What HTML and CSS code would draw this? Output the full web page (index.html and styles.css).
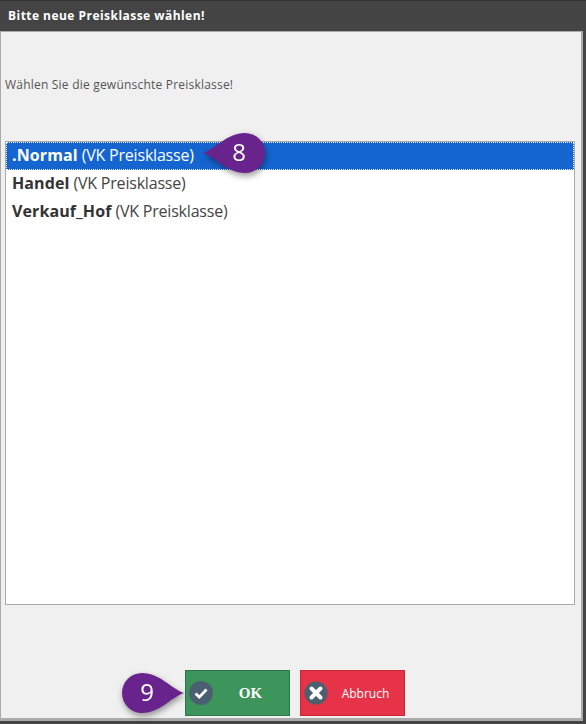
FILE: index.html
```html
<!DOCTYPE html>
<html>
<head>
<meta charset="utf-8">
<title>Preisklasse</title>
<link rel="stylesheet" href="styles.css">
</head>
<body>
<div class="window">
  <div class="titlebar">Bitte neue Preisklasse wählen!</div>
  <div class="content">
    <div class="message">Wählen Sie die gewünschte Preisklasse!</div>
    <div class="list">
      <div class="row selected"><b>.Normal</b> (VK Preisklasse)</div>
      <div class="row"><b>Handel</b> (VK Preisklasse)</div>
      <div class="row"><b>Verkauf_Hof</b> (VK Preisklasse)</div>
    </div>
    <div class="footer">
      <div class="btn ok">
        <svg class="btn-icon" width="24" height="24" viewBox="0 0 24 24">
          <circle cx="12" cy="12" r="12" fill="#4a6070"/>
          <path d="M6.5 12.5l3.8 3.6 7.2-7.6" fill="none" stroke="#fff" stroke-width="2.8"/>
        </svg>
        <span class="btn-label">OK</span>
      </div>
      <div class="btn cancel">
        <svg class="btn-icon" width="24" height="24" viewBox="0 0 24 24">
          <circle cx="12" cy="12" r="11.5" fill="#4a6070"/>
          <path d="M7.5 7.5l9 9M16.5 7.5l-9 9" fill="none" stroke="#fff" stroke-width="4" stroke-linecap="round"/>
        </svg>
        <span class="btn-label">Abbruch</span>
      </div>
    </div>
  </div>
  <div class="callout callout-8">
    <svg width="62" height="40" viewBox="0 0 62 40"><path d="M0 20C14 15 24 0 42 0a20 20 0 0 1 0 40C24 40 14 25 0 20z" fill="#68248c"/></svg>
    <span class="callout-num">8</span>
  </div>
  <div class="callout callout-9">
    <svg width="62" height="40" viewBox="0 0 62 40"><path d="M62 20C48 15 38 0 20 0a20 20 0 0 0 0 40C38 40 48 25 62 20z" fill="#68248c"/></svg>
    <span class="callout-num">9</span>
  </div>
</div>
</body>
</html>
```

FILE: styles.css
```css
html,body{
margin:0;
padding:0;
background:#fff;}
.window{
position:relative;
width:586px;
height:724px;
box-sizing:border-box;
display:flex;
flex-direction:column;
background:#444;
padding-right:3px;
padding-bottom:3px;
font-family:"Open Sans","Noto Sans",sans-serif;
overflow:hidden;}
.titlebar{
height:31px;
box-sizing:border-box;
border-top:1px solid #333;
line-height:30px;
padding-left:8px;
margin-right:-3px;
color:#fff;
font-size:12px;
font-weight:bold;
letter-spacing:.46px;}
.content{
flex:1;
display:flex;
flex-direction:column;
box-sizing:border-box;
background:#f0f0f0;
border:1px solid #aaa;
border-right-width:2px;
border-bottom-width:3px;
padding-left:4px;
padding-right:5px;
min-height:0;}
.message{
margin-top:44px;
height:18px;
line-height:18px;
font-size:12px;
letter-spacing:.21px;
color:#555;}
.list{
flex:1;
margin-top:47px;
border:1px solid #aaa;
background:#fff;
color:#444;
font-size:16px;
letter-spacing:-.2px;
margin-right:1px;}
.list b{
color:#333;
letter-spacing:.1px;}
.row{
height:28px;
line-height:27px;
padding-left:6px;
box-sizing:border-box;}
.selected{
background:#1565d0;
color:#fff;
outline:1px dotted #fff;
outline-offset:-1px;}
.selected b{color:#fff;}
.footer{
height:113px;
box-sizing:border-box;
padding:65px 0 0 180px;
display:flex;
gap:10px;}
.btn{
width:105px;
height:46px;
box-sizing:border-box;
display:flex;
align-items:center;
color:#fff;
position:relative;}
.ok{
background:#3d955c;
border:1px solid #2f7547;}
.cancel{
background:#e63347;
border:1px solid #c92436;}
.btn-icon{
position:absolute;
left:3px;
top:10px;}
.btn-label{
flex:1;
text-align:center;
padding-left:26px;}
.ok .btn-label{
font-family:"Liberation Serif",serif;
font-weight:bold;
font-size:15px;}
.cancel .btn-label{
font-size:12px;}
.callout{
position:absolute;
width:62px;
height:40px;
filter:drop-shadow(1px 3px 3px rgba(0,0,0,.4));}
.callout svg{display:block;}
.callout-8{left:203px;top:133px;}
.callout-9{left:122px;top:673px;}
.callout-num{
position:absolute;
top:-1px;
line-height:39px;
width:40px;
text-align:center;
color:#fff;
font-size:24px;
font-family:"Open Sans",sans-serif;}
.callout-8 .callout-num{left:16px;}
.callout-9 .callout-num{left:5px;}
```
